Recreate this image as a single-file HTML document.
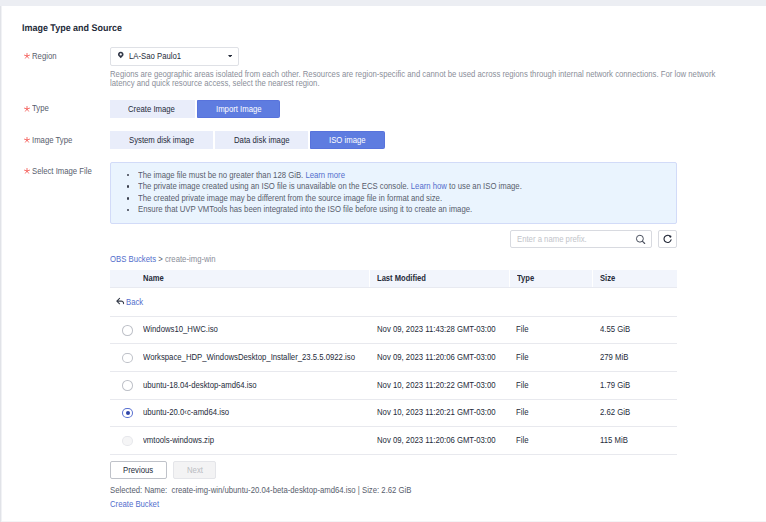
<!DOCTYPE html>
<html><head><meta charset="utf-8"><style>
html,body{margin:0;padding:0;width:766px;height:522px;overflow:hidden;background:#fff;}
.t,.r{position:absolute;}
.t{font-family:"Liberation Sans",sans-serif;white-space:nowrap;transform-origin:0 0;}
</style></head><body>
<div class="r" style="left:0;top:0;width:766px;height:6px;background:#eceef3"></div><div class="r" style="left:0;top:6px;width:1px;height:516px;background:#e1e3e8"></div><div class="r" style="left:1px;top:6px;width:1px;height:516px;background:#f1f2f5"></div><div class="r" style="left:2px;top:521px;width:764px;height:1px;background:#f4f4f6"></div>
<div class="t" style="left:22.00px;top:22.64px;font-size:9.688px;line-height:12px;color:#252b3a;font-weight:bold;transform:scaleX(0.9259);text-rendering:geometricPrecision;">Image Type and Source</div>
<svg class="r" style="left:23.95px;top:53.10px" width="6" height="6" viewBox="0 0 6 6"><g stroke="#f66f6a" stroke-width="0.95" stroke-linecap="round"><line x1="3" y1="3" x2="3.000" y2="0.300"/><line x1="3" y1="3" x2="5.568" y2="2.166"/><line x1="3" y1="3" x2="4.587" y2="5.184"/><line x1="3" y1="3" x2="1.413" y2="5.184"/><line x1="3" y1="3" x2="0.432" y2="2.166"/></g></svg>
<div class="t" style="left:32.00px;top:49.99px;font-size:8.401px;line-height:12px;color:#575d6c;font-weight:normal;transform:scaleX(0.9225);">Region</div>
<svg class="r" style="left:23.95px;top:105.60px" width="6" height="6" viewBox="0 0 6 6"><g stroke="#f66f6a" stroke-width="0.95" stroke-linecap="round"><line x1="3" y1="3" x2="3.000" y2="0.300"/><line x1="3" y1="3" x2="5.568" y2="2.166"/><line x1="3" y1="3" x2="4.587" y2="5.184"/><line x1="3" y1="3" x2="1.413" y2="5.184"/><line x1="3" y1="3" x2="0.432" y2="2.166"/></g></svg>
<div class="t" style="left:32.00px;top:102.49px;font-size:8.401px;line-height:12px;color:#575d6c;font-weight:normal;transform:scaleX(0.9225);">Type</div>
<svg class="r" style="left:23.95px;top:136.90px" width="6" height="6" viewBox="0 0 6 6"><g stroke="#f66f6a" stroke-width="0.95" stroke-linecap="round"><line x1="3" y1="3" x2="3.000" y2="0.300"/><line x1="3" y1="3" x2="5.568" y2="2.166"/><line x1="3" y1="3" x2="4.587" y2="5.184"/><line x1="3" y1="3" x2="1.413" y2="5.184"/><line x1="3" y1="3" x2="0.432" y2="2.166"/></g></svg>
<div class="t" style="left:32.00px;top:133.79px;font-size:8.401px;line-height:12px;color:#575d6c;font-weight:normal;transform:scaleX(0.9225);">Image Type</div>
<svg class="r" style="left:23.95px;top:167.90px" width="6" height="6" viewBox="0 0 6 6"><g stroke="#f66f6a" stroke-width="0.95" stroke-linecap="round"><line x1="3" y1="3" x2="3.000" y2="0.300"/><line x1="3" y1="3" x2="5.568" y2="2.166"/><line x1="3" y1="3" x2="4.587" y2="5.184"/><line x1="3" y1="3" x2="1.413" y2="5.184"/><line x1="3" y1="3" x2="0.432" y2="2.166"/></g></svg>
<div class="t" style="left:32.00px;top:164.79px;font-size:8.401px;line-height:12px;color:#575d6c;font-weight:normal;transform:scaleX(0.9225);">Select Image File</div>
<div class="r" style="left:110.00px;top:47.00px;width:128.50px;height:18.50px;border:1px solid #dfe1e6;border-radius:2px;box-sizing:border-box;background:#fff"></div>
<svg class="r" style="left:117px;top:51.1px" width="8" height="8" viewBox="0 0 8 8"><path d="M3.75 7.3 L1.35 4.75 A2.75 2.75 0 1 1 6.15 4.75 Z" fill="#333949"/><circle cx="3.75" cy="3.4" r="1.1" fill="#fff"/></svg>
<div class="t" style="left:129.30px;top:50.39px;font-size:8.401px;line-height:12px;color:#252b3a;font-weight:normal;transform:scaleX(0.9225);">LA-Sao Paulo1</div>
<svg class="r" style="left:228px;top:54.6px" width="4.2" height="2.6" viewBox="0 0 4.2 2.6"><path d="M0 0H4.2L2.1 2.6Z" fill="#252b3a"/></svg>
<div class="t" style="left:110.00px;top:68.39px;font-size:8.401px;line-height:12px;color:#8a8e99;font-weight:normal;transform:scaleX(0.9225);">Regions are geographic areas isolated from each other. Resources are region-specific and cannot be used across regions through internal network connections. For low network</div>
<div class="t" style="left:110.00px;top:77.39px;font-size:8.401px;line-height:12px;color:#8a8e99;font-weight:normal;transform:scaleX(0.9225);">latency and quick resource access, select the nearest region.</div>
<div class="r" style="left:110.00px;top:100.00px;width:85.00px;height:18.00px;background:#e9edfa;"></div>
<div class="t" style="left:128.40px;top:102.89px;font-size:8.401px;line-height:12px;color:#252b3a;font-weight:normal;transform:scaleX(0.9225);">Create Image</div>
<div class="r" style="left:196.50px;top:100.00px;width:83.70px;height:17.80px;background:#5e7ce0;border:1px solid #5873dc;box-sizing:border-box;border-radius:0 1.5px 1.5px 0;"></div>
<div class="t" style="left:215.80px;top:102.89px;font-size:8.401px;line-height:12px;color:#fff;font-weight:normal;transform:scaleX(0.9225);">Import Image</div>
<div class="r" style="left:110.00px;top:131.20px;width:103.00px;height:17.80px;background:#e9edfa;"></div>
<div class="t" style="left:128.80px;top:134.19px;font-size:8.401px;line-height:12px;color:#252b3a;font-weight:normal;transform:scaleX(0.9225);">System disk image</div>
<div class="r" style="left:214.50px;top:131.20px;width:93.80px;height:17.80px;background:#e9edfa;"></div>
<div class="t" style="left:233.50px;top:134.19px;font-size:8.401px;line-height:12px;color:#252b3a;font-weight:normal;transform:scaleX(0.9225);">Data disk image</div>
<div class="r" style="left:310.00px;top:131.10px;width:75.00px;height:17.90px;background:#5e7ce0;border:1px solid #5873dc;box-sizing:border-box;border-radius:0 1.5px 1.5px 0;"></div>
<div class="t" style="left:329.00px;top:134.19px;font-size:8.401px;line-height:12px;color:#fff;font-weight:normal;transform:scaleX(0.9225);">ISO image</div>
<div class="r" style="left:109.50px;top:162.00px;width:567.50px;height:61.70px;background:#eaf4fe;border:1px solid #d2dbf8;border-radius:2px;box-sizing:border-box"></div>
<div class="r" style="left:126.60px;top:174.10px;width:2.40px;height:2.40px;background:#3a3f4c;border-radius:50%"></div>
<div class="t" style="left:138.00px;top:168.99px;font-size:8.401px;line-height:12px;color:#575d6c;font-weight:normal;transform:scaleX(0.9225);">The image file must be no greater than 128 GiB. <span style="color:#526ecc">Learn more</span></div>
<div class="r" style="left:126.60px;top:185.40px;width:2.40px;height:2.40px;background:#3a3f4c;border-radius:50%"></div>
<div class="t" style="left:138.00px;top:180.49px;font-size:8.401px;line-height:12px;color:#575d6c;font-weight:normal;transform:scaleX(0.9225);">The private image created using an ISO file is unavailable on the ECS console. <span style="color:#526ecc">Learn how</span> to use an ISO image.</div>
<div class="r" style="left:126.60px;top:197.20px;width:2.40px;height:2.40px;background:#3a3f4c;border-radius:50%"></div>
<div class="t" style="left:138.00px;top:191.99px;font-size:8.401px;line-height:12px;color:#575d6c;font-weight:normal;transform:scaleX(0.9225);">The created private image may be different from the source image file in format and size.</div>
<div class="r" style="left:126.60px;top:208.70px;width:2.40px;height:2.40px;background:#3a3f4c;border-radius:50%"></div>
<div class="t" style="left:138.00px;top:203.49px;font-size:8.401px;line-height:12px;color:#575d6c;font-weight:normal;transform:scaleX(0.9225);">Ensure that UVP VMTools has been integrated into the ISO file before using it to create an image.</div>
<div class="r" style="left:510.40px;top:230.10px;width:142.00px;height:17.60px;border:1px solid #d8dae0;border-radius:2px;box-sizing:border-box;background:#fff"></div>
<div class="t" style="left:516.90px;top:233.09px;font-size:8.401px;line-height:12px;color:#c2c4ca;font-weight:normal;transform:scaleX(0.9225);">Enter a name prefix.</div>
<svg class="r" style="left:635px;top:234px" width="11" height="11" viewBox="0 0 11 11"><circle cx="4.9" cy="4.7" r="3.45" fill="none" stroke="#4a505e" stroke-width="1.0"/><line x1="7.3" y1="7.1" x2="9.7" y2="9.5" stroke="#4a505e" stroke-width="1.1" stroke-linecap="round"/></svg>
<div class="r" style="left:658.00px;top:230.10px;width:18.50px;height:17.60px;border:1px solid #d8dae0;border-radius:2px;box-sizing:border-box;background:#fff"></div>
<svg class="r" style="left:662px;top:233px" width="12" height="12" viewBox="0 0 12 12"><path d="M8.36 3.59 A3.6 3.6 0 1 0 9.06 6.89" fill="none" stroke="#252b3a" stroke-width="1.15" stroke-linecap="round"/><circle cx="8.4" cy="3.6" r="1.05" fill="#252b3a"/></svg>
<div class="t" style="left:110.00px;top:253.09px;font-size:8.401px;line-height:12px;color:#8a8e99;font-weight:normal;transform:scaleX(0.9225);"><span style="color:#526ecc">OBS Buckets</span> <span style="color:#575d6c">&gt;</span> create-img-win</div>
<div class="r" style="left:110.00px;top:269.70px;width:566.90px;height:17.90px;background:#f2f5fc;border-bottom:1px solid #e8eaf1;box-sizing:border-box"></div>
<div class="r" style="left:369.20px;top:269.70px;width:1.00px;height:16.90px;background:#fff"></div>
<div class="r" style="left:508.80px;top:269.70px;width:1.00px;height:16.90px;background:#fff"></div>
<div class="r" style="left:591.90px;top:269.70px;width:1.00px;height:16.90px;background:#fff"></div>
<div class="t" style="left:143.10px;top:272.65px;font-size:8.238px;line-height:12px;color:#252b3a;font-weight:bold;transform:scaleX(0.9225);">Name</div>
<div class="t" style="left:376.90px;top:272.65px;font-size:8.238px;line-height:12px;color:#252b3a;font-weight:bold;transform:scaleX(0.9225);">Last Modified</div>
<div class="t" style="left:516.90px;top:272.65px;font-size:8.238px;line-height:12px;color:#252b3a;font-weight:bold;transform:scaleX(0.9225);">Type</div>
<div class="t" style="left:599.90px;top:272.65px;font-size:8.238px;line-height:12px;color:#252b3a;font-weight:bold;transform:scaleX(0.9225);">Size</div>
<svg class="r" style="left:115px;top:297px" width="10" height="8" viewBox="0 0 10 8"><path d="M4.6 1.4 L1.8 4.1 L4.6 6.8 M1.8 4.1 H6 Q8.6 4.3 8.6 6.6" fill="none" stroke="#343a48" stroke-width="1.05" stroke-linecap="round" stroke-linejoin="round"/></svg>
<div class="t" style="left:126.20px;top:295.89px;font-size:8.401px;line-height:12px;color:#526ecc;font-weight:normal;transform:scaleX(0.9225);">Back</div>
<div class="r" style="left:110.00px;top:316.00px;width:567.00px;height:1.00px;background:#e8e9ee"></div>
<div class="r" style="left:110.00px;top:343.00px;width:567.00px;height:1.00px;background:#e8e9ee"></div>
<div class="r" style="left:110.00px;top:371.00px;width:567.00px;height:1.00px;background:#e8e9ee"></div>
<div class="r" style="left:110.00px;top:399.00px;width:567.00px;height:1.00px;background:#e8e9ee"></div>
<div class="r" style="left:110.00px;top:426.00px;width:567.00px;height:1.00px;background:#e8e9ee"></div>
<div class="r" style="left:110.00px;top:454.00px;width:567.00px;height:1.00px;background:#e8e9ee"></div>
<div class="r" style="left:122.40px;top:325.05px;width:10.55px;height:10.50px;border:1px solid #bec1c8;border-radius:50%;box-sizing:border-box;background:#fff"></div>
<div class="t" style="left:143.10px;top:323.00px;font-size:8.401px;line-height:12px;color:#252b3a;font-weight:normal;transform:scaleX(0.9225);">Windows10_HWC.iso</div>
<div class="t" style="left:376.90px;top:323.00px;font-size:8.401px;line-height:12px;color:#252b3a;font-weight:normal;transform:scaleX(0.9225);">Nov 09, 2023 11:43:28 GMT-03:00</div>
<div class="t" style="left:516.00px;top:323.00px;font-size:8.401px;line-height:12px;color:#252b3a;font-weight:normal;transform:scaleX(0.9225);">File</div>
<div class="t" style="left:599.50px;top:323.00px;font-size:8.401px;line-height:12px;color:#252b3a;font-weight:normal;transform:scaleX(0.9225);">4.55 GiB</div>
<div class="r" style="left:122.40px;top:352.65px;width:10.55px;height:10.50px;border:1px solid #bec1c8;border-radius:50%;box-sizing:border-box;background:#fff"></div>
<div class="t" style="left:143.10px;top:351.00px;font-size:8.401px;line-height:12px;color:#252b3a;font-weight:normal;transform:scaleX(0.9225);">Workspace_HDP_WindowsDesktop_Installer_23.5.5.0922.iso</div>
<div class="t" style="left:376.90px;top:351.00px;font-size:8.401px;line-height:12px;color:#252b3a;font-weight:normal;transform:scaleX(0.9225);">Nov 09, 2023 11:20:06 GMT-03:00</div>
<div class="t" style="left:516.00px;top:351.00px;font-size:8.401px;line-height:12px;color:#252b3a;font-weight:normal;transform:scaleX(0.9225);">File</div>
<div class="t" style="left:599.50px;top:351.00px;font-size:8.401px;line-height:12px;color:#252b3a;font-weight:normal;transform:scaleX(0.9225);">279 MiB</div>
<div class="r" style="left:122.40px;top:380.15px;width:10.55px;height:10.50px;border:1px solid #bec1c8;border-radius:50%;box-sizing:border-box;background:#fff"></div>
<div class="t" style="left:143.10px;top:379.00px;font-size:8.401px;line-height:12px;color:#252b3a;font-weight:normal;transform:scaleX(0.9225);">ubuntu-18.04-desktop-amd64.iso</div>
<div class="t" style="left:376.90px;top:379.00px;font-size:8.401px;line-height:12px;color:#252b3a;font-weight:normal;transform:scaleX(0.9225);">Nov 10, 2023 11:20:22 GMT-03:00</div>
<div class="t" style="left:516.00px;top:379.00px;font-size:8.401px;line-height:12px;color:#252b3a;font-weight:normal;transform:scaleX(0.9225);">File</div>
<div class="t" style="left:599.50px;top:379.00px;font-size:8.401px;line-height:12px;color:#252b3a;font-weight:normal;transform:scaleX(0.9225);">1.79 GiB</div>
<div class="r" style="left:122.40px;top:407.65px;width:10.55px;height:10.50px;border:1px solid #5870d0;border-radius:50%;box-sizing:border-box;background:#fff"></div>
<div class="r" style="left:125.70px;top:410.80px;width:4.20px;height:4.20px;background:#2f45a8;border-radius:50%"></div>
<div class="t" style="left:143.10px;top:406.00px;font-size:8.401px;line-height:12px;color:#252b3a;font-weight:normal;transform:scaleX(0.9225);">ubuntu-20.0&lsaquo;c-amd64.iso</div>
<div class="t" style="left:376.90px;top:406.00px;font-size:8.401px;line-height:12px;color:#252b3a;font-weight:normal;transform:scaleX(0.9225);">Nov 10, 2023 11:20:21 GMT-03:00</div>
<div class="t" style="left:516.00px;top:406.00px;font-size:8.401px;line-height:12px;color:#252b3a;font-weight:normal;transform:scaleX(0.9225);">File</div>
<div class="t" style="left:599.50px;top:406.00px;font-size:8.401px;line-height:12px;color:#252b3a;font-weight:normal;transform:scaleX(0.9225);">2.62 GiB</div>
<div class="r" style="left:122.40px;top:435.55px;width:10.55px;height:10.50px;border:1px solid #e6e7eb;border-radius:50%;box-sizing:border-box;background:#f5f5f6"></div>
<div class="t" style="left:143.10px;top:434.00px;font-size:8.401px;line-height:12px;color:#252b3a;font-weight:normal;transform:scaleX(0.9225);">vmtools-windows.zip</div>
<div class="t" style="left:376.90px;top:434.00px;font-size:8.401px;line-height:12px;color:#252b3a;font-weight:normal;transform:scaleX(0.9225);">Nov 09, 2023 11:20:06 GMT-03:00</div>
<div class="t" style="left:516.00px;top:434.00px;font-size:8.401px;line-height:12px;color:#252b3a;font-weight:normal;transform:scaleX(0.9225);">File</div>
<div class="t" style="left:599.50px;top:434.00px;font-size:8.401px;line-height:12px;color:#252b3a;font-weight:normal;transform:scaleX(0.9225);">115 MiB</div>
<div class="r" style="left:109.60px;top:461.40px;width:57.10px;height:17.20px;border:1px solid #bfc2c9;border-radius:2px;box-sizing:border-box;background:#fff"></div>
<div class="t" style="left:123.00px;top:463.89px;font-size:8.401px;line-height:12px;color:#252b3a;font-weight:normal;transform:scaleX(0.9225);">Previous</div>
<div class="r" style="left:173.20px;top:461.40px;width:42.50px;height:17.20px;border:1px solid #e4e5e9;border-radius:2px;box-sizing:border-box;background:#f3f3f4"></div>
<div class="t" style="left:186.80px;top:463.89px;font-size:8.401px;line-height:12px;color:#b9bbc1;font-weight:normal;transform:scaleX(0.9225);">Next</div>
<div class="t" style="left:110.00px;top:483.79px;font-size:8.401px;line-height:12px;color:#575d6c;font-weight:normal;transform:scaleX(0.9225);">Selected: Name:&nbsp; create-img-win/ubuntu-20.04-beta-desktop-amd64.iso | Size: 2.62 GiB</div>
<div class="t" style="left:110.00px;top:498.19px;font-size:8.401px;line-height:12px;color:#526ecc;font-weight:normal;transform:scaleX(0.9225);">Create Bucket</div>

</body></html>
